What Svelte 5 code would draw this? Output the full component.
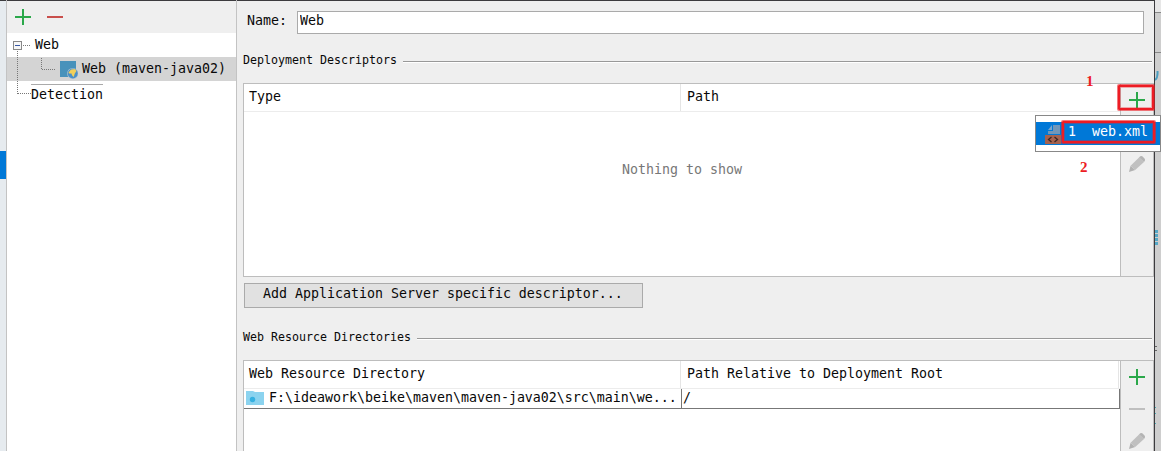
<script>
  const columns = {
    descriptors: ['Type', 'Path'],
    resources: ['Web Resource Directory', 'Path Relative to Deployment Root']
  };
</script>

{#snippet plus()}
  <svg class="tool" width="16" height="16" viewBox="0 0 16 16"><path d="M0 8H16M8 0V16" stroke="#2ba84a" stroke-width="2" /></svg>
{/snippet}
{#snippet pencil()}
  <svg class="tool" width="16" height="16" viewBox="0 0 16 16"><path d="M0 16L1.6 9.8L6.2 14Z" fill="#b2b2b2" /><path d="M1.6 9.8L10 1.5L15 6L6.2 14Z" fill="#c0c0c0" /><path d="M10 1.5L11.3 .3Q12.5 -.4 13.6 .5L15.5 2.5Q16.5 3.8 15.7 5L15 6Z" fill="#b4b4b4" /></svg>
{/snippet}

<div class="window">
  <div class="gutter"><div class="selected-mark"></div></div>
  <aside>
    <div class="actions">
      {@render plus()}
      <svg width="16" height="16" viewBox="0 0 16 16"><path d="M0 8H16" stroke="#c94f4b" stroke-width="2" /></svg>
    </div>
    <div class="tree">
      <svg class="guides" width="60" height="72" viewBox="0 0 60 72" fill="none" shape-rendering="crispEdges">
        <path d="M16 12.5H24M10.5 18V61M11 60.5H24M34.5 25V37M35 36.5H48" stroke="#777" stroke-dasharray="1 1" />
        <rect x="6.5" y="8.5" width="8" height="8" fill="#f7f7f7" stroke="#888" />
        <path d="M8 12.5H13" stroke="#3657a5" />
      </svg>
      <div class="node root">Web</div>
      <div class="node child">
        <svg width="18" height="18" viewBox="0 0 18 18">
          <path d="M0 0H16V16H0Z" fill="#4892bb" />
          <circle cx="12.8" cy="12.5" r="5.6" fill="#b9c9d4" /><circle cx="12.8" cy="12.5" r="5" fill="#4b8fc8" />
          <path d="M8.5 11.5L11 8.5L15 8L16.5 10L14.8 12.5L13.7 16L12 14.2L11.5 12.5L9 12.5Z" fill="#f2cf59" />
        </svg>
        <span>Web (maven-java02)</span>
      </div>
      <div class="node detection"><span>Detection</span></div>
    </div>
  </aside>

  <main>
    <label class="name"><span>Name:</span><input value="Web" /></label>
    <h2 class="first">Deployment Descriptors</h2>
    <section class="panel descriptors">
      <div class="table">
        <div class="header">{#each columns.descriptors as c}<div>{c}</div>{/each}</div>
        <div class="empty">Nothing to show</div>
      </div>
      <div class="tools">{@render plus()}<i class="minus"></i>{@render pencil()}</div>
    </section>
    <button>Add Application Server specific descriptor...</button>
    <h2 class="second">Web Resource Directories</h2>
    <section class="panel resources">
      <div class="table">
        <div class="header">{#each columns.resources as c}<div>{c}</div>{/each}</div>
        <div class="row">
          <div class="path">
            <svg width="18" height="14" viewBox="0 0 18 14"><path d="M0 0H7L9 1H18V14H0Z" fill="#8bd3ef" /><circle cx="6.5" cy="8.5" r="2.7" fill="#36b1e1" /></svg>
            <span>F:\ideawork\beike\maven\maven-java02\src\main\we...</span>
          </div>
          <div class="relative">/</div>
        </div>
      </div>
      <div class="tools">{@render plus()}<i class="minus"></i>{@render pencil()}</div>
    </section>
  </main>
  <div class="backdrop">
    <svg width="6" height="451" viewBox="0 0 6 451">
      <path d="M0 0H6V12H0Z" fill="#e7e7e7" /><path d="M0 12.5H6M0 52.5H6" stroke="#888" />
      <path d="M0 80Q3 78 2.5 71" fill="none" stroke="#4b9fc1" stroke-width="2" />
      <path d="M0 231.5H3M0 235.5H3M0 239.5H3M0 243.5H3" stroke="#55a8c7" stroke-width="3" />
      <path d="M0 346.5H2M0 350.5H2" stroke="#666" /><path d="M0 407.5H1M0 413.5H1M0 423.5H1" stroke="#45aeb9" />
    </svg>
  </div>

  <div class="popup">
    <div class="option">
      <svg width="16" height="20" viewBox="0 0 16 20">
        <path d="M8 1H15V10H3V7H8Z" fill="#7196b8" /><path d="M3 6L7 1V6Z" fill="#7ba6cc" />
        <path d="M0 11H16V20H0Z" fill="#a5624f" /><path d="M6.5 13L3.5 15.5L6.5 18M9.5 13L12.5 15.5L9.5 18" fill="none" stroke="#3b2725" stroke-width="1.3" />
      </svg>
      <span>1&nbsp; web.xml</span>
    </div>
  </div>
  <div class="callout add"></div>
  <div class="callout file"></div>
  <b class="step one">1</b>
  <b class="step two">2</b>
</div>

<style>
  .window, .window * { box-sizing: border-box; }
  .window { position: relative; width: 1161px; height: 451px; overflow: hidden; display: grid; grid-template-columns: 6px 231px 917px 7px; background: #efefef; color: #080808; font: 13.29px/20px "DejaVu Sans Mono", monospace; white-space: nowrap; }
  svg { display: block; flex: none; }
  .gutter { background: #e6ebef; border-top: 1px solid #3c3b3e; padding-top: 150px; }
  .selected-mark { height: 28px; background: #0078d7; }
  aside { border: solid #c3c3c3; border-width: 0 1px; background: #fff; }
  .actions { height: 33px; border-top: 1px solid #3c3b3e; background: #efefef; display: flex; gap: 16px; padding: 8px 0 0 8px; }
  .tree { position: relative; }
  .guides { position: absolute; left: 0; top: 0; z-index: 1; }
  .node { height: 24px; display: flex; align-items: center; }
  .root { padding-left: 28px; }
  .child { background: #d4d4d4; padding-left: 53px; gap: 4px; }
  .child svg { margin-top: 2px; }
  .detection { padding: 3px 0 0 24px; }
  .detection span { border-top: 1px solid #aaa; line-height: 20px; }
  main { height: 451px; border-top: 1px solid #3c3b3e; padding-left: 6px; min-width: 0; overflow: hidden; }
  .name { display: flex; margin-top: 10px; height: 23px; padding-left: 4px; }
  .name span { width: 50px; }
  input { width: 847px; height: 23px; border: 1px solid #aaa; background: #fff; color: inherit; font: inherit; padding: 0 2px 4px; outline: none; border-radius: 0; }
  h2 { display: flex; align-items: center; gap: 6px; height: 20px; margin: 0 2px 0 0; font-size: 11.63px; font-weight: 400; }
  h2::after { content: ""; flex: 1; height: 1px; background: #999; border-bottom: 1px solid #fff; margin-top: 4px; }
  .first { margin-top: 16px; }
  .second { margin-top: 19px; }
  .panel { display: grid; grid-template-columns: 877px 32px; width: 911px; background: #efefef; border: 1px solid #bdbdbd; }
  .descriptors { height: 194px; margin-top: 13px; }
  .resources { height: 110px; margin-top: 13px; }
  .table { background: #fff; border-right: 1px solid #bdbdbd; min-width: 0; }
  .header { display: grid; grid-template-columns: 437px 438px; height: 28px; border-bottom: 1px solid #ececec; }
  .header div { padding: 3px 0 0 5px; border-right: 1px solid #e5e5e5; }
  .descriptors .header div:last-child { border-right: 0; }
  .header div + div { padding-left: 6px; }
  .empty { text-align: center; padding-top: 48px; color: #777; }
  .tools { display: flex; flex-direction: column; align-items: center; padding-top: 8px; gap: 16px; }
  .minus { width: 16px; height: 16px; padding: 7px 0; background: #bfbfbf; background-clip: content-box; }
  button { display: block; width: 399px; height: 25px; margin: 6px 0 0 1px; padding: 0 0 4px 18px; border: 1px solid #aaa; border-radius: 0; background: #e1e1e1; color: inherit; font: inherit; text-align: left; line-height: 20px; }
  .row { display: grid; grid-template-columns: 438px 438px; height: 20px; width: 876px; border-bottom: 1px solid #777; line-height: 15px; }
  .path { display: flex; gap: 5px; padding: 1px 0 0 2px; border-right: 1px solid #777; }
  .path svg { margin-top: 1px; }
  .relative { width: 438px; padding: 1px 0 0 1px; border-right: 1px solid #777; }
  .backdrop { background: #cecece; border-left: 1px solid #3c3b3e; height: 451px; }
  .popup { position: absolute; left: 1035px; top: 115px; width: 126px; height: 37px; border: 1px solid #888; background: #fff; padding-top: 6px; }
  .option { height: 23px; background: #0078d7; color: #fff; display: flex; align-items: center; padding-left: 9px; gap: 7px; }
  .option span { line-height: 20px; padding-bottom: 3px; }
  .callout { position: absolute; border: 2px solid #ed1c24; box-shadow: 0 0 0 1px #ed1c2499, inset 0 0 0 1px #ed1c2455; border-radius: 1px; }
  .add { left: 1118px; top: 85px; width: 36px; height: 25px; }
  .file { left: 1062px; top: 121px; width: 93px; height: 22px; }
  .step { position: absolute; color: #ed1c24; font: bold 15px/16px "Liberation Serif", serif; }
  .one { left: 1086px; top: 73px; }
  .two { left: 1080px; top: 159px; }
</style>
